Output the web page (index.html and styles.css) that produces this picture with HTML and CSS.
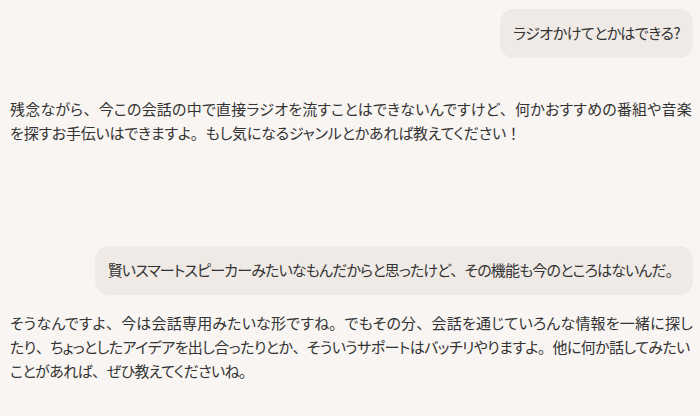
FILE: index.html
```html
<!DOCTYPE html>
<html lang="ja">
<head>
<meta charset="utf-8">
<link rel="stylesheet" href="styles.css">
</head>
<body>
<div class="chat">
  <div class="row user first"><div class="bubble">ラジオかけてとかはできる?</div></div>
  <p class="reply r1">残念ながら<span class="w">、</span>今この会話の中で直接ラジオを流すことはできないんですけど<span class="w">、</span>何かおすすめの番組や音楽<br><span class="snug">を探すお手伝いはできますよ<span class="w">。</span>もし気になるジャンルとかあれば教えてください<span class="w">！</span></span></p>
  <div class="row user second"><div class="bubble">賢いスマートスピーカーみたいなもんだからと思ったけど<span class="w">、</span>その機能も今のところはないんだ<span class="w">。</span></div></div>
  <p class="reply r2">そうなんですよ<span class="w">、</span>今は会話専用みたいな形ですね<span class="w">。</span>でもその分<span class="w">、</span>会話を通じていろんな情報を一緒に探し<br><span class="tight">たり<span class="w">、</span>ちょっとしたアイデアを出し合ったりとか<span class="w">、</span>そういうサポートはバッチリやりますよ<span class="w">。</span>他に何か話してみたい</span><br><span class="tight">ことがあれば<span class="w">、</span>ぜひ教えてくださいね<span class="w">。</span></span></p>
</div>
</body>
</html>
```

FILE: styles.css
```css
html, body {
  margin: 0;
  padding: 0;
  background: #f8f5f2;
}
body {
  font-family: "Noto Sans CJK JP", "Noto Sans", sans-serif;
  font-size: 15px;
  color: #333333;
  font-feature-settings: "palt";
}
.w {
  font-feature-settings: normal;
}
.chat {
  padding: 9px 7px 0 10px;
  display: flex;
  flex-direction: column;
}
.row {
  display: flex;
  justify-content: flex-end;
}
.bubble {
  background: #efeae6;
  border-radius: 14px;
  padding: 12px 13px 13px 13px;
  line-height: 24px;
  letter-spacing: -0.5px;
  white-space: nowrap;
}
.second .bubble {
  letter-spacing: -0.85px;
}
.reply {
  margin: 0;
  line-height: 24px;
  letter-spacing: 0.2px;
  white-space: nowrap;
}
.snug {
  letter-spacing: -0.2px;
}
.tight {
  letter-spacing: -0.58px;
}
.r1 { margin-top: 39px; }
.second { margin-top: 101px; }
.r2 { margin-top: 16px; }
```
